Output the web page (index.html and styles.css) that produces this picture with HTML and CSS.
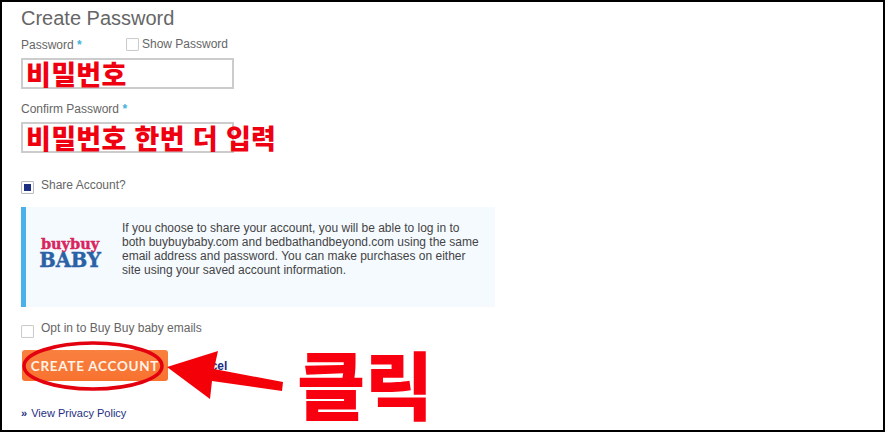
FILE: index.html
```html
<!DOCTYPE html>
<html lang="en">
<head>
<meta charset="utf-8">
<title>Create Password</title>
<link rel="stylesheet" href="styles.css">
</head>
<body>
<main class="frame">
  <h1 class="title">Create Password</h1>
  <div class="label-row">
    <label class="label pw-label">Password <span class="req">*</span></label>
    <span class="check small"></span>
    <span class="label show-label">Show Password</span>
  </div>
  <div class="input"><span class="note">비밀번호</span></div>
  <label class="label confirm">Confirm Password <span class="req">*</span></label>
  <div class="input second"><span class="note">비밀번호 한번 더 입력</span></div>
  <div class="check-row share">
    <span class="check on"><span class="dot"></span></span>
    <span class="label">Share Account?</span>
  </div>
  <section class="info">
    <div class="logo">
      <span class="buy">buybuy</span>
      <span class="baby">BABY</span>
    </div>
    <p class="info-text">If you choose to share your account, you will be able to log in to both buybuybaby.com and bedbathandbeyond.com using the same email address and password. You can make purchases on either site using your saved account information.</p>
  </section>
  <div class="check-row opt">
    <span class="check"></span>
    <span class="label">Opt in to Buy Buy baby emails</span>
  </div>
  <div class="actions">
    <button class="cta" type="button">CREATE ACCOUNT</button>
    <a class="cancel">Cancel</a>
  </div>
  <div class="privacy"><span class="raquo">»</span> <a>View Privacy Policy</a></div>

  <svg class="marks" width="885" height="432" viewBox="0 0 885 432" aria-hidden="true">
    <ellipse cx="93" cy="366" rx="69" ry="23" fill="none" stroke="#e3000f" stroke-width="3.5"/>
    <polygon points="167,367 218,351 214,369 283,382 282,391 212,381 210,399" fill="#f40009"/>
  </svg>
  <span class="click">클릭</span>
</main>
</body>
</html>
```
FILE: styles.css
```css
* { box-sizing: border-box; }
html, body { margin: 0; padding: 0; background: #fff; }
.frame {
  position: relative;
  width: 885px;
  height: 432px;
  overflow: hidden;
  border: 2px solid #000;
  padding: 6px 0 0 19px;
  font-family: "Liberation Sans", Arial, sans-serif;
  color: #666;
  background: #fff;
}
.title {
  margin: 0;
  font-size: 20px;
  line-height: 20px;
  font-weight: 400;
  color: #666;
}
.label { font-size: 12px; line-height: 14px; color: #666; }
.req { color: #3fb2dc; font-weight: 700; }
.label-row { display: flex; align-items: center; margin-top: 9px; height: 15px; }
.pw-label { width: 105px; }
.show-label { margin: -2px 0 0 3px; }
.check {
  display: block;
  flex: none;
  width: 13px;
  height: 13px;
  border: 1px solid #ccc;
  border-radius: 1px;
  background: #fff;
  box-shadow: inset 0 0 1px #ddd;
}
.check.on { display: flex; align-items: center; justify-content: center; border-color: #bbb; }
.dot { width: 7px; height: 7px; background: #1d2f80; }
.input {
  width: 213px;
  height: 31px;
  margin-top: 6px;
  border: 2px solid #ccc;
  background: #fff;
  overflow: visible;
  white-space: nowrap;
  padding-left: 3px;
}
.second { margin-top: 6px; }
.note {
  display: block;
  font-family: "Noto Sans CJK KR", sans-serif;
  font-weight: 900;
  font-size: 27px;
  line-height: 27px;
  letter-spacing: 0.3px;
  word-spacing: 1.5px;
  color: #ef0010;
}
.confirm { display: block; margin-top: 13px; }
.check-row { display: flex; gap: 7px; }
.share { margin-top: 25px; align-items: flex-start; }
.share .check { margin-top: 3px; }
.info {
  display: flex;
  align-items: flex-start;
  width: 474px;
  height: 100px;
  margin-top: 13px;
  background: #f5faff;
  border-left: 5px solid #4cb0ea;
}
.logo {
  display: flex;
  flex-direction: column;
  align-items: center;
  width: 64px;
  margin: 29px 0 0 12px;
  font-family: "DejaVu Serif", serif;
  font-weight: 700;
  -webkit-text-stroke: 0.4px currentColor;
}
.buy { font-size: 14.5px; line-height: 16px; color: #d9245c; }
.baby { font-size: 19.5px; line-height: 18px; color: #2a62a5; }
.info-text {
  width: 360px;
  margin: 14px 0 0 20px;
  font-size: 12px;
  line-height: 14px;
  color: #444;
}
.opt { margin-top: 14px; align-items: flex-start; }
.opt .check { margin-top: 4px; }
.actions { display: flex; align-items: center; gap: 20px; margin: 12px 0 0 1px; }
.cta {
  width: 146px;
  height: 31px;
  padding: 0;
  border: 0;
  border-radius: 3px;
  background: linear-gradient(#f9803f, #f8722f);
  color: #fff3e8;
  font-family: Lato, "Liberation Sans", sans-serif;
  font-weight: 700;
  font-size: 13.5px;
  letter-spacing: 0.7px;
}
.cancel { font-size: 12px; font-weight: 700; color: #1d2f80; }
.privacy { margin-top: 25px; font-size: 11px; line-height: 14px; color: #1d2f80; }
.raquo { margin-right: 1px; font-weight: 700; }
.marks { position: absolute; left: -2px; top: -2px; pointer-events: none; }
.click {
  position: absolute;
  left: 295px;
  top: 338px;
  font-family: "Noto Sans CJK KR", sans-serif;
  font-weight: 900;
  font-size: 74px;
  line-height: 84px;
  color: #f90010;
}
```
